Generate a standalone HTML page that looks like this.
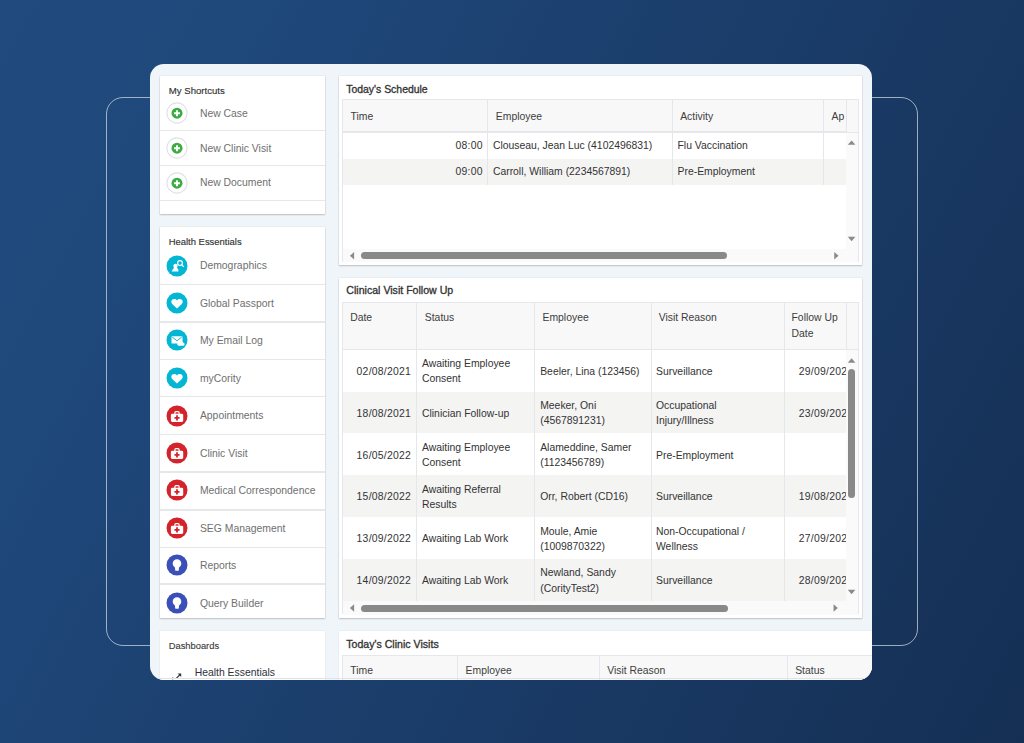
<!DOCTYPE html>
<html><head><meta charset="utf-8"><style>
html,body{margin:0;padding:0;width:1024px;height:743px;overflow:hidden;}
body{background:linear-gradient(118deg,#214b7e 0%,#1f487b 18%,#152f54 100%);font-family:"Liberation Sans",sans-serif;position:relative;}
.outline{position:absolute;left:106px;top:97px;width:812px;height:549px;box-sizing:border-box;border:1.5px solid rgba(215,224,235,.7);border-radius:17px;}
.card{position:absolute;left:150px;top:64px;width:722px;height:616px;border-radius:14px;background:#f0f5fa;overflow:hidden;}
.r{position:absolute;}
.t{position:absolute;white-space:nowrap;line-height:14px;}
.md{-webkit-text-stroke:0.32px currentColor;}
</style></head><body>
<div class="outline"></div>
<div class="card">
<div class="r" style="left:10.00px;top:12.00px;width:165.40px;height:138.00px;background:#fff;box-shadow:0 1px 1.5px rgba(0,0,0,.2),0 0 0 .6px rgba(0,0,0,.05);"></div>
<div class="t " style="left:18.80px;top:20.00px;font-size:9.6px;color:#333;-webkit-text-stroke:0.15px currentColor;">My Shortcuts</div>
<div class="r" style="left:15.70px;top:37.90px;width:22px;height:22px;"><svg width="22" height="22" viewBox="0 0 22 22"><circle cx="11" cy="11" r="10.1" fill="#fff" stroke="#e0e2e6" stroke-width="1.1"/><circle cx="11" cy="11.2" r="5.5" fill="#3bab42"/><path d="M11 8.2v6M8 11.2h6" stroke="#fff" stroke-width="1.9"/></svg></div>
<div class="t " style="left:49.90px;top:42.70px;font-size:10.4px;color:#6f6f6f;">New Case</div>
<div class="r" style="left:15.70px;top:72.80px;width:22px;height:22px;"><svg width="22" height="22" viewBox="0 0 22 22"><circle cx="11" cy="11" r="10.1" fill="#fff" stroke="#e0e2e6" stroke-width="1.1"/><circle cx="11" cy="11.2" r="5.5" fill="#3bab42"/><path d="M11 8.2v6M8 11.2h6" stroke="#fff" stroke-width="1.9"/></svg></div>
<div class="t " style="left:49.90px;top:77.60px;font-size:10.4px;color:#6f6f6f;">New Clinic Visit</div>
<div class="r" style="left:15.70px;top:107.60px;width:22px;height:22px;"><svg width="22" height="22" viewBox="0 0 22 22"><circle cx="11" cy="11" r="10.1" fill="#fff" stroke="#e0e2e6" stroke-width="1.1"/><circle cx="11" cy="11.2" r="5.5" fill="#3bab42"/><path d="M11 8.2v6M8 11.2h6" stroke="#fff" stroke-width="1.9"/></svg></div>
<div class="t " style="left:49.90px;top:112.40px;font-size:10.4px;color:#6f6f6f;">New Document</div>
<div class="r" style="left:10.00px;top:65.50px;width:165.40px;height:1.50px;background:#e6e7e9;"></div>
<div class="r" style="left:10.00px;top:100.50px;width:165.40px;height:1.50px;background:#e6e7e9;"></div>
<div class="r" style="left:10.00px;top:135.50px;width:165.40px;height:1.50px;background:#e6e7e9;"></div>
<div class="r" style="left:10.00px;top:163.30px;width:165.40px;height:391.00px;background:#fff;box-shadow:0 1px 1.5px rgba(0,0,0,.2),0 0 0 .6px rgba(0,0,0,.05);"></div>
<div class="t " style="left:18.70px;top:171.40px;font-size:9.45px;color:#333;-webkit-text-stroke:0.15px currentColor;">Health Essentials</div>
<div class="r" style="left:15.70px;top:190.50px;width:22px;height:22px;"><svg width="22" height="22" viewBox="0 0 22 22"><circle cx="11" cy="11" r="10.5" fill="#03b6d4"/><path d="M5.6 16.4h6.8v-1.3c0-1.1-.9-1.8-1.8-2.1 .7-.5 1-1.2 1-2.1 0-1.3-.9-2.2-2.1-2.2s-2.1.9-2.1 2.2c0 .9.3 1.6 1 2.1-.9.3-1.8 1-1.8 2.1z" fill="#fff"/><circle cx="14" cy="8.1" r="2.4" fill="none" stroke="#fff" stroke-width="1.2"/><path d="M15.7 9.9l2 2" stroke="#fff" stroke-width="1.3"/></svg></div>
<div class="t " style="left:49.90px;top:195.30px;font-size:10.4px;color:#6f6f6f;">Demographics</div>
<div class="r" style="left:15.70px;top:227.80px;width:22px;height:22px;"><svg width="22" height="22" viewBox="0 0 22 22"><circle cx="11" cy="11" r="10.5" fill="#03b6d4"/><path d="M11 16.6l-4.6-4.3c-1.5-1.5-1.5-3.6 0-4.7 1.3-1 3.3-.8 4.6.8 1.3-1.6 3.3-1.8 4.6-.8 1.5 1.1 1.5 3.2 0 4.7z" fill="#fff"/></svg></div>
<div class="t " style="left:49.90px;top:232.60px;font-size:10.4px;color:#6f6f6f;">Global Passport</div>
<div class="r" style="left:15.70px;top:265.30px;width:22px;height:22px;"><svg width="22" height="22" viewBox="0 0 22 22"><circle cx="11" cy="11" r="10.5" fill="#03b6d4"/><rect x="5.5" y="7.3" width="11" height="7.3" rx=".7" fill="#fff"/><path d="M6.2 8l4.8 3.8 4.8-3.8" stroke="#03b6d4" stroke-width=".9" fill="none"/><path d="M12.6 16.8h4.4a1.6 1.6 0 0 0 0-3.2 2 2 0 0 0-3.8-.2 1.7 1.7 0 0 0-.6 3.4z" fill="#fff"/></svg></div>
<div class="t " style="left:49.90px;top:270.10px;font-size:10.4px;color:#6f6f6f;">My Email Log</div>
<div class="r" style="left:15.70px;top:303.00px;width:22px;height:22px;"><svg width="22" height="22" viewBox="0 0 22 22"><circle cx="11" cy="11" r="10.5" fill="#03b6d4"/><path d="M11 16.6l-4.6-4.3c-1.5-1.5-1.5-3.6 0-4.7 1.3-1 3.3-.8 4.6.8 1.3-1.6 3.3-1.8 4.6-.8 1.5 1.1 1.5 3.2 0 4.7z" fill="#fff"/></svg></div>
<div class="t " style="left:49.90px;top:307.80px;font-size:10.4px;color:#6f6f6f;">myCority</div>
<div class="r" style="left:15.70px;top:340.50px;width:22px;height:22px;"><svg width="22" height="22" viewBox="0 0 22 22"><circle cx="11" cy="11" r="10.5" fill="#d4232a"/><path d="M8.9 8.9V7.6c0-.6.4-1 1-1h2.2c.6 0 1 .4 1 1v1.3" stroke="#fff" stroke-width="1.2" fill="none"/><rect x="4.9" y="8.7" width="12.3" height="8.3" rx="1.4" fill="#fff"/><path d="M11 10.3v5.1M8.45 12.85h5.1" stroke="#d4232a" stroke-width="1.8"/></svg></div>
<div class="t " style="left:49.90px;top:345.30px;font-size:10.4px;color:#6f6f6f;">Appointments</div>
<div class="r" style="left:15.70px;top:378.20px;width:22px;height:22px;"><svg width="22" height="22" viewBox="0 0 22 22"><circle cx="11" cy="11" r="10.5" fill="#d4232a"/><path d="M8.9 8.9V7.6c0-.6.4-1 1-1h2.2c.6 0 1 .4 1 1v1.3" stroke="#fff" stroke-width="1.2" fill="none"/><rect x="4.9" y="8.7" width="12.3" height="8.3" rx="1.4" fill="#fff"/><path d="M11 10.3v5.1M8.45 12.85h5.1" stroke="#d4232a" stroke-width="1.8"/></svg></div>
<div class="t " style="left:49.90px;top:383.00px;font-size:10.4px;color:#6f6f6f;">Clinic Visit</div>
<div class="r" style="left:15.70px;top:415.40px;width:22px;height:22px;"><svg width="22" height="22" viewBox="0 0 22 22"><circle cx="11" cy="11" r="10.5" fill="#d4232a"/><path d="M8.9 8.9V7.6c0-.6.4-1 1-1h2.2c.6 0 1 .4 1 1v1.3" stroke="#fff" stroke-width="1.2" fill="none"/><rect x="4.9" y="8.7" width="12.3" height="8.3" rx="1.4" fill="#fff"/><path d="M11 10.3v5.1M8.45 12.85h5.1" stroke="#d4232a" stroke-width="1.8"/></svg></div>
<div class="t " style="left:49.90px;top:420.20px;font-size:10.4px;color:#6f6f6f;">Medical Correspondence</div>
<div class="r" style="left:15.70px;top:452.90px;width:22px;height:22px;"><svg width="22" height="22" viewBox="0 0 22 22"><circle cx="11" cy="11" r="10.5" fill="#d4232a"/><path d="M8.9 8.9V7.6c0-.6.4-1 1-1h2.2c.6 0 1 .4 1 1v1.3" stroke="#fff" stroke-width="1.2" fill="none"/><rect x="4.9" y="8.7" width="12.3" height="8.3" rx="1.4" fill="#fff"/><path d="M11 10.3v5.1M8.45 12.85h5.1" stroke="#d4232a" stroke-width="1.8"/></svg></div>
<div class="t " style="left:49.90px;top:457.70px;font-size:10.4px;color:#6f6f6f;">SEG Management</div>
<div class="r" style="left:15.70px;top:490.30px;width:22px;height:22px;"><svg width="22" height="22" viewBox="0 0 22 22"><circle cx="11" cy="11" r="10.5" fill="#3b4fb8"/><path d="M11 5.3c-2.4 0-4.3 1.8-4.3 4.1 0 1.5.7 2.5 1.6 3.4.5.5.8 1 .8 1.6v1.7c0 .4.3.7.7.7h2.4c.4 0 .7-.3.7-.7v-1.7c0-.6.3-1.1.8-1.6.9-.9 1.6-1.9 1.6-3.4 0-2.3-1.9-4.1-4.3-4.1z" fill="#fff"/></svg></div>
<div class="t " style="left:49.90px;top:495.10px;font-size:10.4px;color:#6f6f6f;">Reports</div>
<div class="r" style="left:15.70px;top:528.20px;width:22px;height:22px;"><svg width="22" height="22" viewBox="0 0 22 22"><circle cx="11" cy="11" r="10.5" fill="#3b4fb8"/><path d="M11 5.3c-2.4 0-4.3 1.8-4.3 4.1 0 1.5.7 2.5 1.6 3.4.5.5.8 1 .8 1.6v1.7c0 .4.3.7.7.7h2.4c.4 0 .7-.3.7-.7v-1.7c0-.6.3-1.1.8-1.6.9-.9 1.6-1.9 1.6-3.4 0-2.3-1.9-4.1-4.3-4.1z" fill="#fff"/></svg></div>
<div class="t " style="left:49.90px;top:533.00px;font-size:10.4px;color:#6f6f6f;">Query Builder</div>
<div class="r" style="left:10.00px;top:219.90px;width:165.40px;height:1.50px;background:#e6e7e9;"></div>
<div class="r" style="left:10.00px;top:257.00px;width:165.40px;height:1.50px;background:#e6e7e9;"></div>
<div class="r" style="left:10.00px;top:294.90px;width:165.40px;height:1.50px;background:#e6e7e9;"></div>
<div class="r" style="left:10.00px;top:331.90px;width:165.40px;height:1.50px;background:#e6e7e9;"></div>
<div class="r" style="left:10.00px;top:369.90px;width:165.40px;height:1.50px;background:#e6e7e9;"></div>
<div class="r" style="left:10.00px;top:407.00px;width:165.40px;height:1.50px;background:#e6e7e9;"></div>
<div class="r" style="left:10.00px;top:445.10px;width:165.40px;height:1.50px;background:#e6e7e9;"></div>
<div class="r" style="left:10.00px;top:482.80px;width:165.40px;height:1.50px;background:#e6e7e9;"></div>
<div class="r" style="left:10.00px;top:519.40px;width:165.40px;height:1.50px;background:#e6e7e9;"></div>
<div class="r" style="left:10.00px;top:567.00px;width:165.40px;height:69.00px;background:#fff;box-shadow:0 0 0 .6px rgba(0,0,0,.05);"></div>
<div class="t " style="left:18.70px;top:575.30px;font-size:9.35px;color:#3a3a3a;-webkit-text-stroke:0.12px currentColor;">Dashboards</div>
<div class="t " style="left:44.70px;top:602.00px;font-size:10.4px;color:#2f2f3a;">Health Essentials</div>
<div class="r" style="left:18.00px;top:602.00px;width:16px;height:13px;"><svg width="16" height="13" viewBox="0 0 16 13"><circle cx="4.7" cy="11.4" r=".9" fill="#333"/><path d="M8.3 11.3l4.2-4.2" stroke="#333" stroke-width="1.2" fill="none"/><path d="M9.6 6.4h3.6v3.6z" fill="#333"/></svg></div>
<div class="r" style="left:188.50px;top:12.20px;width:523.50px;height:188.60px;background:#fff;box-shadow:0 1px 1.5px rgba(0,0,0,.2),0 0 0 .6px rgba(0,0,0,.05);"></div>
<div class="t md" style="left:196.20px;top:18.50px;font-size:10.45px;color:#333;">Today's Schedule</div>
<div class="r" style="left:192.00px;top:35.00px;width:516.50px;height:163.00px;border:1px solid #e5e7ea;border-bottom:0;box-sizing:border-box;background:#fff;"></div>
<div class="r" style="left:193.00px;top:36.00px;width:503.00px;height:31.50px;background:#f8f8f8;"></div>
<div class="r" style="left:193.00px;top:67.00px;width:514.50px;height:1.50px;background:#e5e7ea;"></div>
<div class="r" style="left:696.00px;top:36.00px;width:11.50px;height:31.50px;background:#f8f8f8;"></div>
<div class="r" style="left:193.00px;top:94.50px;width:503.00px;height:26.50px;background:#f4f4f3;"></div>
<div class="r" style="left:337.20px;top:36.00px;width:1.00px;height:85.00px;background:#e5e7ea;"></div>
<div class="r" style="left:522.10px;top:36.00px;width:1.00px;height:85.00px;background:#e5e7ea;"></div>
<div class="r" style="left:673.20px;top:36.00px;width:1.00px;height:85.00px;background:#e5e7ea;"></div>
<div class="r" style="left:695.60px;top:36.00px;width:1.00px;height:31.50px;background:#e5e7ea;"></div>
<div class="t " style="left:200.60px;top:45.60px;font-size:10.4px;color:#3d3d3d;">Time</div>
<div class="t " style="left:345.80px;top:45.60px;font-size:10.4px;color:#3d3d3d;">Employee</div>
<div class="t " style="left:530.20px;top:45.60px;font-size:10.4px;color:#3d3d3d;">Activity</div>
<div class="t " style="left:681.50px;top:45.60px;font-size:10.4px;color:#3d3d3d;">Ap</div>
<div class="r" style="left:673.70px;top:36.00px;width:22.30px;height:31.50px;overflow:hidden;"></div>
<div class="t" style="right:389.20px;top:75.00px;font-size:10.4px;color:#333;letter-spacing:0.25px;">08:00</div>
<div class="t" style="right:389.20px;top:101.00px;font-size:10.4px;color:#333;letter-spacing:0.25px;">09:00</div>
<div class="t " style="left:342.90px;top:75.00px;font-size:10.4px;color:#333;">Clouseau, Jean Luc (4102496831)</div>
<div class="t " style="left:342.90px;top:101.00px;font-size:10.4px;color:#333;">Carroll, William (2234567891)</div>
<div class="t " style="left:527.50px;top:75.00px;font-size:10.4px;color:#333;">Flu Vaccination</div>
<div class="t " style="left:527.50px;top:101.00px;font-size:10.4px;color:#333;">Pre-Employment</div>
<div class="r" style="left:193.00px;top:185.00px;width:503.00px;height:13.00px;background:#fafafa;"></div>
<div class="r" style="left:696.00px;top:68.50px;width:11.50px;height:129.50px;background:#fafafa;"></div>
<div class="r" style="left:211.30px;top:188.20px;width:366.00px;height:7.00px;background:#898989;border-radius:3.5px;"></div>
<div class="r" style="left:188.50px;top:213.70px;width:523.50px;height:340.10px;background:#fff;box-shadow:0 1px 1.5px rgba(0,0,0,.2),0 0 0 .6px rgba(0,0,0,.05);"></div>
<div class="t md" style="left:196.30px;top:218.90px;font-size:10.6px;color:#333;">Clinical Visit Follow Up</div>
<div class="r" style="left:192.00px;top:237.60px;width:516.50px;height:312.90px;border:1px solid #e5e7ea;border-bottom:0;box-sizing:border-box;background:#fff;"></div>
<div class="r" style="left:193.00px;top:238.60px;width:514.50px;height:46.40px;background:#f8f8f8;"></div>
<div class="r" style="left:193.00px;top:284.60px;width:514.50px;height:1.40px;background:#e5e7ea;"></div>
<div class="r" style="left:193.00px;top:327.50px;width:503.00px;height:41.90px;background:#f4f4f3;"></div>
<div class="r" style="left:193.00px;top:411.30px;width:503.00px;height:41.90px;background:#f4f4f3;"></div>
<div class="r" style="left:193.00px;top:495.10px;width:503.00px;height:41.90px;background:#f4f4f3;"></div>
<div class="r" style="left:265.90px;top:238.60px;width:1.00px;height:298.40px;background:#e5e7ea;"></div>
<div class="r" style="left:383.80px;top:238.60px;width:1.00px;height:298.40px;background:#e5e7ea;"></div>
<div class="r" style="left:500.70px;top:238.60px;width:1.00px;height:298.40px;background:#e5e7ea;"></div>
<div class="r" style="left:633.50px;top:238.60px;width:1.00px;height:298.40px;background:#e5e7ea;"></div>
<div class="r" style="left:695.60px;top:238.60px;width:1.00px;height:46.40px;background:#e5e7ea;"></div>
<div class="t " style="left:200.20px;top:247.00px;font-size:10.4px;color:#3d3d3d;">Date</div>
<div class="t " style="left:274.80px;top:247.00px;font-size:10.4px;color:#3d3d3d;">Status</div>
<div class="t " style="left:392.50px;top:247.00px;font-size:10.4px;color:#3d3d3d;">Employee</div>
<div class="t " style="left:508.70px;top:247.00px;font-size:10.4px;color:#3d3d3d;">Visit Reason</div>
<div class="t " style="left:641.50px;top:247.00px;font-size:10.4px;color:#3d3d3d;">Follow Up</div>
<div class="t " style="left:641.50px;top:262.50px;font-size:10.4px;color:#3d3d3d;">Date</div>
<div class="t" style="right:460.90px;top:300.70px;font-size:10.4px;color:#333;letter-spacing:0.25px;">02/08/2021</div>
<div class="t " style="left:272.00px;top:292.90px;font-size:10.4px;color:#333;">Awaiting Employee</div>
<div class="t " style="left:272.00px;top:308.40px;font-size:10.4px;color:#333;">Consent</div>
<div class="t " style="left:390.20px;top:300.70px;font-size:10.4px;color:#333;">Beeler, Lina (123456)</div>
<div class="t " style="left:506.00px;top:300.70px;font-size:10.4px;color:#333;">Surveillance</div>
<div class="r" style="left:634.5px;top:285.60px;width:61.5px;height:41.9px;overflow:hidden"><div class="t " style="left:14.30px;top:15.10px;font-size:10.4px;color:#333;letter-spacing:0.25px;">29/09/2022</div></div>
<div class="t" style="right:460.90px;top:342.60px;font-size:10.4px;color:#333;letter-spacing:0.25px;">18/08/2021</div>
<div class="t " style="left:272.00px;top:342.60px;font-size:10.4px;color:#333;">Clinician Follow-up</div>
<div class="t " style="left:390.20px;top:334.80px;font-size:10.4px;color:#333;">Meeker, Oni</div>
<div class="t " style="left:390.20px;top:350.30px;font-size:10.4px;color:#333;">(4567891231)</div>
<div class="t " style="left:506.00px;top:334.80px;font-size:10.4px;color:#333;">Occupational</div>
<div class="t " style="left:506.00px;top:350.30px;font-size:10.4px;color:#333;">Injury/Illness</div>
<div class="r" style="left:634.5px;top:327.50px;width:61.5px;height:41.9px;overflow:hidden"><div class="t " style="left:14.30px;top:15.10px;font-size:10.4px;color:#333;letter-spacing:0.25px;">23/09/2022</div></div>
<div class="t" style="right:460.90px;top:384.50px;font-size:10.4px;color:#333;letter-spacing:0.25px;">16/05/2022</div>
<div class="t " style="left:272.00px;top:376.70px;font-size:10.4px;color:#333;">Awaiting Employee</div>
<div class="t " style="left:272.00px;top:392.20px;font-size:10.4px;color:#333;">Consent</div>
<div class="t " style="left:390.20px;top:376.70px;font-size:10.4px;color:#333;">Alameddine, Samer</div>
<div class="t " style="left:390.20px;top:392.20px;font-size:10.4px;color:#333;">(1123456789)</div>
<div class="t " style="left:506.00px;top:384.50px;font-size:10.4px;color:#333;">Pre-Employment</div>
<div class="t" style="right:460.90px;top:426.40px;font-size:10.4px;color:#333;letter-spacing:0.25px;">15/08/2022</div>
<div class="t " style="left:272.00px;top:418.60px;font-size:10.4px;color:#333;">Awaiting Referral</div>
<div class="t " style="left:272.00px;top:434.10px;font-size:10.4px;color:#333;">Results</div>
<div class="t " style="left:390.20px;top:426.40px;font-size:10.4px;color:#333;">Orr, Robert (CD16)</div>
<div class="t " style="left:506.00px;top:426.40px;font-size:10.4px;color:#333;">Surveillance</div>
<div class="r" style="left:634.5px;top:411.30px;width:61.5px;height:41.9px;overflow:hidden"><div class="t " style="left:14.30px;top:15.10px;font-size:10.4px;color:#333;letter-spacing:0.25px;">19/08/2022</div></div>
<div class="t" style="right:460.90px;top:468.30px;font-size:10.4px;color:#333;letter-spacing:0.25px;">13/09/2022</div>
<div class="t " style="left:272.00px;top:468.30px;font-size:10.4px;color:#333;">Awaiting Lab Work</div>
<div class="t " style="left:390.20px;top:460.50px;font-size:10.4px;color:#333;">Moule, Amie</div>
<div class="t " style="left:390.20px;top:476.00px;font-size:10.4px;color:#333;">(1009870322)</div>
<div class="t " style="left:506.00px;top:460.50px;font-size:10.4px;color:#333;">Non-Occupational /</div>
<div class="t " style="left:506.00px;top:476.00px;font-size:10.4px;color:#333;">Wellness</div>
<div class="r" style="left:634.5px;top:453.20px;width:61.5px;height:41.9px;overflow:hidden"><div class="t " style="left:14.30px;top:15.10px;font-size:10.4px;color:#333;letter-spacing:0.25px;">27/09/2022</div></div>
<div class="t" style="right:460.90px;top:510.20px;font-size:10.4px;color:#333;letter-spacing:0.25px;">14/09/2022</div>
<div class="t " style="left:272.00px;top:510.20px;font-size:10.4px;color:#333;">Awaiting Lab Work</div>
<div class="t " style="left:390.20px;top:502.40px;font-size:10.4px;color:#333;">Newland, Sandy</div>
<div class="t " style="left:390.20px;top:517.90px;font-size:10.4px;color:#333;">(CorityTest2)</div>
<div class="t " style="left:506.00px;top:510.20px;font-size:10.4px;color:#333;">Surveillance</div>
<div class="r" style="left:634.5px;top:495.10px;width:61.5px;height:41.9px;overflow:hidden"><div class="t " style="left:14.30px;top:15.10px;font-size:10.4px;color:#333;letter-spacing:0.25px;">28/09/2022</div></div>
<div class="r" style="left:193.00px;top:537.00px;width:503.00px;height:13.50px;background:#fafafa;"></div>
<div class="r" style="left:696.00px;top:286.00px;width:11.50px;height:264.50px;background:#fafafa;"></div>
<div class="r" style="left:211.30px;top:540.50px;width:366.50px;height:7.00px;background:#898989;border-radius:3.5px;"></div>
<div class="r" style="left:697.80px;top:304.80px;width:7.60px;height:128.90px;background:#898989;border-radius:3.8px;"></div>
<div class="r" style="left:188.50px;top:567.20px;width:541.50px;height:68.80px;background:#fff;box-shadow:0 0 0 .6px rgba(0,0,0,.05);"></div>
<div class="t md" style="left:196.20px;top:572.60px;font-size:10.6px;color:#333;">Today's Clinic Visits</div>
<div class="r" style="left:192.00px;top:590.60px;width:538.00px;height:45.40px;border:1px solid #e5e7ea;box-sizing:border-box;background:#f8f8f8;"></div>
<div class="r" style="left:307.00px;top:591.60px;width:1.00px;height:44.40px;background:#e5e7ea;"></div>
<div class="r" style="left:449.00px;top:591.60px;width:1.00px;height:44.40px;background:#e5e7ea;"></div>
<div class="r" style="left:637.10px;top:591.60px;width:1.00px;height:44.40px;background:#e5e7ea;"></div>
<div class="t " style="left:200.30px;top:600.00px;font-size:10.4px;color:#3d3d3d;">Time</div>
<div class="t " style="left:315.60px;top:600.00px;font-size:10.4px;color:#3d3d3d;">Employee</div>
<div class="t " style="left:457.20px;top:600.00px;font-size:10.4px;color:#3d3d3d;">Visit Reason</div>
<div class="t " style="left:645.20px;top:600.00px;font-size:10.4px;color:#3d3d3d;">Status</div>
<div class="r" style="left:0.00px;top:613.60px;width:722.00px;height:1.20px;background:#dfe2e6;"></div>
<svg class="r" style="left:0;top:0" width="722" height="616" viewBox="150 64 722 616"><polygon points="354.128,252.0 354.128,259.6 349.872,255.8" fill="#8a8a8a"/><polygon points="834.2719999999999,252.0 834.2719999999999,259.6 838.528,255.8" fill="#8a8a8a"/><polygon points="847.8000000000001,144.82799999999997 855.4,144.82799999999997 851.6,140.572" fill="#8a8a8a"/><polygon points="847.8000000000001,236.872 855.4,236.872 851.6,241.128" fill="#8a8a8a"/><polygon points="354.128,604.2 354.128,611.8 349.872,608" fill="#8a8a8a"/><polygon points="833.572,604.2 833.572,611.8 837.8280000000001,608" fill="#8a8a8a"/><polygon points="847.8000000000001,362.628 855.4,362.628 851.6,358.372" fill="#8a8a8a"/><polygon points="847.8000000000001,589.872 855.4,589.872 851.6,594.128" fill="#8a8a8a"/></svg>
</div>
</body></html>
